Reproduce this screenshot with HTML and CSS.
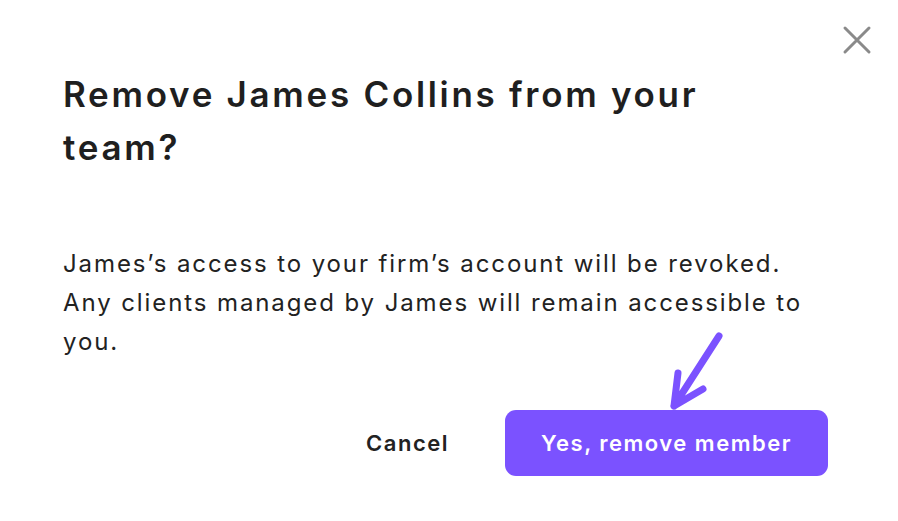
FILE: index.html
```html
<!DOCTYPE html>
<html>
<head>
    <meta charset="UTF-8">
    <meta name="viewport" content="width=device-width, initial-scale=1">
    <title>Remover membro</title>
    <link rel="stylesheet" href="styles.css">
</head>
<body>
    <div class="dialog">
        <!-- Botão de fechar -->
        <button class="close" aria-label="Close">
            <svg width="30" height="30" viewBox="0 0 30 30">
                <path d="M3 3 L27 27 M27 3 L3 27" stroke="#8a8a8a" stroke-width="3" stroke-linecap="round" fill="none"/>
            </svg>
        </button>

        <h1 class="title">Remove James Collins from your team?</h1>

        <p class="message">James’s access to your firm’s account will be revoked. Any clients managed by James will remain accessible to you.</p>

        <div class="actions">
            <button class="btn-cancel">Cancel</button>
            <button class="btn-confirm">Yes, remove member</button>
            <!-- Seta de destaque -->
            <svg class="arrow" width="60" height="84" viewBox="0 0 60 84">
                <path d="M51 6 L6 76 M6 76 L10 43 M6 76 L35 59" stroke="#7b52ff" stroke-width="7" stroke-linecap="round" stroke-linejoin="round" fill="none"/>
            </svg>
        </div>
    </div>
</body>
</html>
```

FILE: styles.css
```css
/* Estilos gerais */
body {
    margin: 0;
    padding: 0;
    background: #fff;
    font-family: "Inter", "Liberation Sans", sans-serif;
    color: #222;
}

.dialog {
    position: relative;
    padding: 68px 70px 0 63px;
}

.close {
    position: absolute;
    top: 25px;
    right: 26px;
    background: none;
    border: none;
    padding: 0;
    cursor: pointer;
}

.close svg {
    display: block;
}

.title {
    margin: 0;
    font-size: 35px;
    font-weight: 600;
    letter-spacing: 2.7px;
    line-height: 53px;
    color: #1f1f1f;
    max-width: 680px;
}

.message {
    margin: 70px 0 0;
    max-width: 760px;
    font-size: 24px;
    font-weight: 400;
    letter-spacing: 1.9px;
    line-height: 39px;
    color: #222;
}

.actions {
    position: relative;
    display: flex;
    justify-content: flex-end;
    align-items: center;
    gap: 56px;
    margin-top: 49px;
}

.btn-cancel {
    background: none;
    border: none;
    padding: 0;
    font-family: inherit;
    font-size: 22px;
    font-weight: 600;
    letter-spacing: 1.5px;
    color: #222;
    cursor: pointer;
}

.btn-confirm {
    width: 323px;
    height: 66px;
    background-color: #7b52ff;
    color: #fff;
    border: none;
    border-radius: 11px;
    font-family: inherit;
    font-size: 22px;
    font-weight: 600;
    letter-spacing: 1.5px;
    cursor: pointer;
}

.arrow {
    position: absolute;
    right: 100px;
    top: -80px;
}
```
